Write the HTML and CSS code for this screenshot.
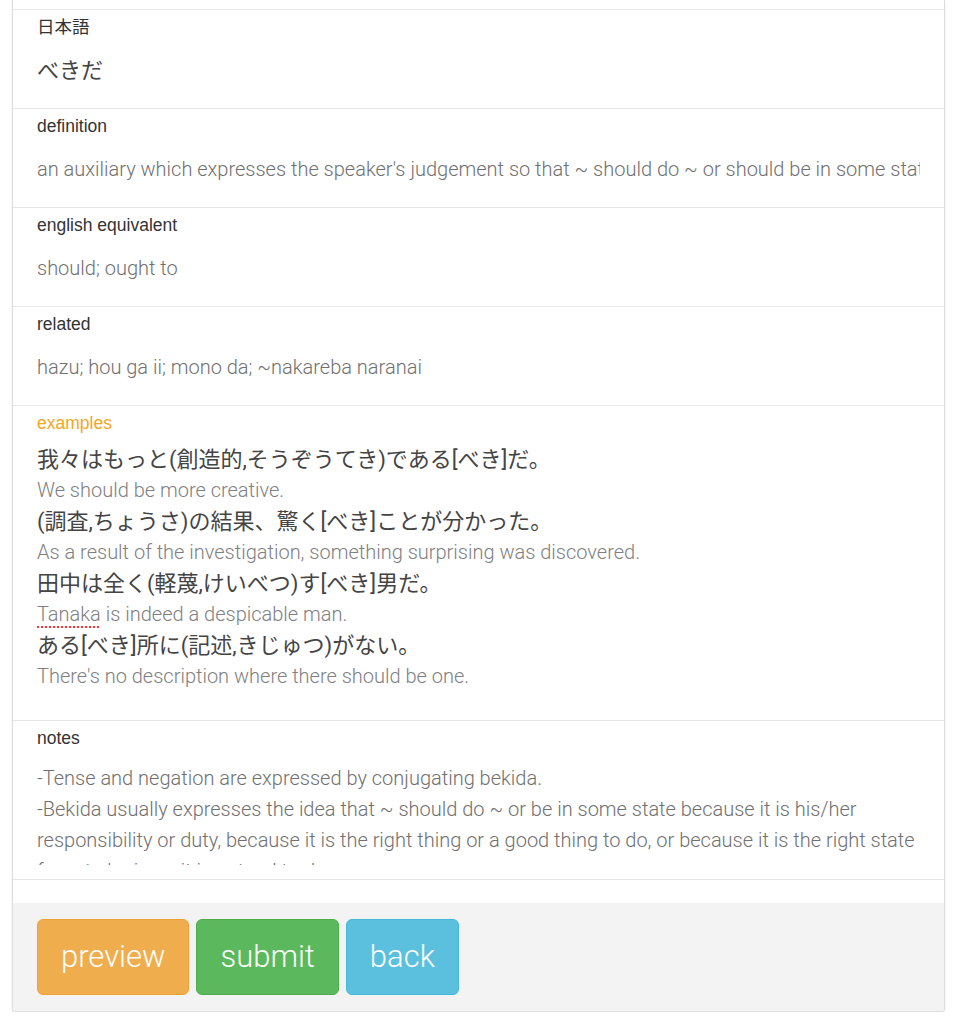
FILE: index.html
```html
<!DOCTYPE html>
<html lang="ja">
<head>
  <meta charset="UTF-8">
  <title>べきだ</title>
  <link rel="stylesheet" href="styles.css">
</head>
<body>

<div class="panel">
  <div class="item item-cut"></div>

  <div class="item">
    <div class="label">日本語</div>
    <div class="value value-jp">べきだ</div>
  </div>

  <div class="item">
    <div class="label">definition</div>
    <div class="value">an auxiliary which expresses the speaker's judgement so that ~ should do ~ or should be in some state because it is the right thing</div>
  </div>

  <div class="item">
    <div class="label">english equivalent</div>
    <div class="value">should; ought to</div>
  </div>

  <div class="item">
    <div class="label">related</div>
    <div class="value">hazu; hou ga ii; mono da; ~nakareba naranai</div>
  </div>

  <div class="item item-examples">
    <div class="label label-active">examples</div>
    <div class="examples">
      <p class="jp">我々はもっと(創造的,そうぞうてき)である[べき]だ。</p>
      <p class="en">We should be more creative.</p>
      <p class="jp">(調査,ちょうさ)の結果、驚く[べき]ことが分かった。</p>
      <p class="en">As a result of the investigation, something surprising was discovered.</p>
      <p class="jp">田中は全く(軽蔑,けいべつ)す[べき]男だ。</p>
      <p class="en"><span class="typo">Tanaka</span> is indeed a despicable man.</p>
      <p class="jp">ある[べき]所に(記述,きじゅつ)がない。</p>
      <p class="en">There's no description where there should be one.</p>
    </div>
  </div>

  <div class="item item-notes">
    <div class="label">notes</div>
    <div class="notes">
      <p>-Tense and negation are expressed by conjugating bekida.</p>
      <p>-Bekida usually expresses the idea that ~ should do ~ or be in some state because it is his/her responsibility or duty, because it is the right thing or a good thing to do, or because it is the right state for ~ to be in, or it is natural to do.</p>
    </div>
  </div>

  <div class="spacer"></div>

  <div class="footer">
    <a href="#" class="btn btn-warning">preview</a>
    <a href="#" class="btn btn-success">submit</a>
    <a href="#" class="btn btn-info">back</a>
  </div>
</div>

</body>
</html>
```

FILE: styles.css
```css
* {
  margin: 0;
  padding: 0;
  box-sizing: border-box;
}

body {
  background-color: #fff;
  font-family: Roboto, "Noto Sans CJK JP", sans-serif;
  color: #333;
}

/* 面板上边已经滚出屏幕 */
.panel {
  width: 933px;
  margin-left: 12px;
  border: 1px solid #ddd;
  border-top: 0;
  border-radius: 0 0 4px 4px;
  box-shadow: 0 1px 2px rgba(0, 0, 0, 0.12);
  overflow: hidden;
}

.item {
  border-top: 1px solid #e7e7e7;
  padding: 6px 24px 22px;
}

.item-cut {
  height: 9px;
  border-top: 0;
  padding: 0;
}

.label {
  font-family: "Liberation Sans", "Noto Sans CJK JP", sans-serif;
  font-size: 17.5px;
  line-height: 22px;
  color: #333;
}

.label-active {
  color: #f5a623;
}

.value {
  margin-top: 17px;
  font-family: Roboto, "Noto Sans CJK JP", sans-serif;
  font-weight: 300;
  font-size: 20px;
  line-height: 31px;
  color: #707070;
  white-space: nowrap;
  overflow: hidden;
}

.value-jp {
  font-size: 22px;
  font-weight: 400;
  color: #444;
}

.item-examples {
  padding-bottom: 28px;
}

.examples {
  margin-top: 10px;
}

.examples p {
  font-family: Roboto, "Noto Sans CJK JP", sans-serif;
  font-weight: 300;
  font-size: 20px;
  line-height: 31px;
}

.examples .jp {
  font-size: 22px;
  font-weight: 400;
  color: #444;
}

.examples .en {
  color: #808080;
}

.typo {
  text-decoration: underline dotted #f33;
  text-decoration-thickness: 2px;
  text-underline-offset: 5px;
}

/* textarea 只露出三行多一点 */
.item-notes {
  padding-bottom: 14px;
}

.notes {
  margin-top: 14px;
  height: 102px;
  overflow: hidden;
  font-family: Roboto, sans-serif;
  font-weight: 300;
  font-size: 20px;
  line-height: 31px;
  color: #707070;
}

.spacer {
  height: 24px;
  border-top: 1px solid #e7e7e7;
}

.footer {
  background-color: #f3f3f3;
  padding: 16px 24px;
  display: flex;
  gap: 7px;
}

.btn {
  display: block;
  height: 76px;
  padding: 0 23px;
  border: 1px solid transparent;
  border-radius: 6px;
  font-family: Roboto, sans-serif;
  font-weight: 300;
  font-size: 31px;
  line-height: 74px;
  color: #fff;
  text-decoration: none;
}

.btn-warning {
  background-color: #f0ad4e;
  border-color: #eea236;
}

.btn-success {
  background-color: #5cb85c;
  border-color: #4cae4c;
}

.btn-info {
  background-color: #5bc0de;
  border-color: #46b8da;
}
```
